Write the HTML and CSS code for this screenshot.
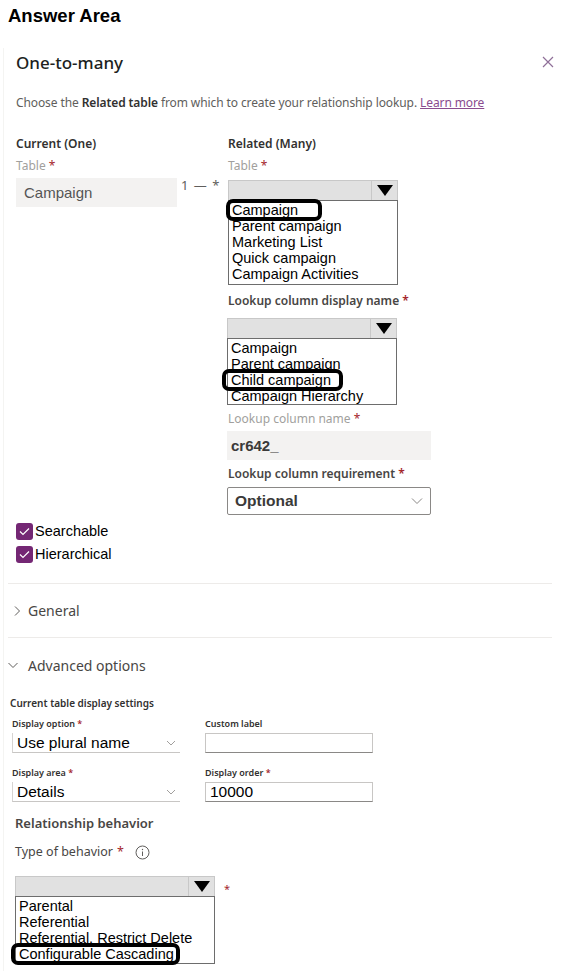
FILE: index.html
```html
<!DOCTYPE html>
<html lang="en">
<head>
    <meta charset="UTF-8">
    <meta name="viewport" content="width=device-width, initial-scale=1.0">
    <title>Answer Area - One-to-many</title>
    <link rel="stylesheet" href="styles.css">
</head>
<body>
    <h1 class="page-title">Answer Area</h1>

    <div class="panel">
        <div class="panel-head">
            <h2>One-to-many</h2>
            <svg class="close" width="12" height="12" viewBox="0 0 12 12">
                <path d="M1 1 L11 11 M11 1 L1 11" stroke="#8f6f98" stroke-width="1.2" fill="none"/>
            </svg>
        </div>

        <p class="intro">Choose the <b>Related table</b> from which to create your relationship lookup. <a href="#">Learn more</a></p>

        <div class="tables">
            <div class="col">
                <h3>Current (One)</h3>
                <div class="label muted">Table <span class="req">*</span></div>
                <div class="field readonly">Campaign</div>
            </div>

            <div class="link">1 — *</div>

            <div class="col">
                <h3>Related (Many)</h3>
                <div class="label muted">Table <span class="req">*</span></div>
                <div class="combo">
                    <div class="combo-head"><span class="combo-btn"><i class="tri"></i></span></div>
                    <ul class="combo-list list-table">
                        <li><span class="pick pick-long">Campaign</span></li>
                        <li>Parent campaign</li>
                        <li>Marketing List</li>
                        <li>Quick campaign</li>
                        <li>Campaign Activities</li>
                    </ul>
                </div>

                <div class="label dark gap-display">Lookup column display name <span class="req">*</span></div>
                <div class="combo combo-display">
                    <div class="combo-head"><span class="combo-btn"><i class="tri"></i></span></div>
                    <ul class="combo-list">
                        <li>Campaign</li>
                        <li>Parent campaign</li>
                        <li><span class="pick">Child campaign</span></li>
                        <li>Campaign Hierarchy</li>
                    </ul>
                </div>

                <div class="label muted gap-name">Lookup column name <span class="req">*</span></div>
                <div class="field readonly wide strong">cr642_</div>

                <div class="label dark gap-req">Lookup column requirement <span class="req">*</span></div>
                <div class="select wide">
                    <span>Optional</span>
                    <svg width="12" height="8" viewBox="0 0 12 8"><path d="M1 1.5 L6 6.5 L11 1.5" stroke="#8a8886" stroke-width="1" fill="none"/></svg>
                </div>
            </div>
        </div>

        <div class="checks">
            <label class="check">
                <span class="box"><svg width="11" height="9" viewBox="0 0 11 9"><path d="M1 4.5 L4 7.5 L10 1.5" stroke="#fff" stroke-width="1.2" fill="none"/></svg></span>
                Searchable
            </label>
            <label class="check">
                <span class="box"><svg width="11" height="9" viewBox="0 0 11 9"><path d="M1 4.5 L4 7.5 L10 1.5" stroke="#fff" stroke-width="1.2" fill="none"/></svg></span>
                Hierarchical
            </label>
        </div>

        <div class="divider"></div>
        <div class="toggle">
            <svg class="chev" width="10" height="12" viewBox="0 0 10 12"><path d="M3 1.5 L7.5 6 L3 10.5" stroke="#605e5c" stroke-width="1" fill="none"/></svg>
            General
        </div>
        <div class="divider"></div>
        <div class="toggle open">
            <svg class="chev" width="12" height="10" viewBox="0 0 12 10"><path d="M1.5 3 L6 7.5 L10.5 3" stroke="#605e5c" stroke-width="1" fill="none"/></svg>
            Advanced options
        </div>

        <div class="advanced">
            <div class="small-head">Current table display settings</div>
            <div class="settings">
                <div>
                    <div class="tiny-label">Display option <span class="req">*</span></div>
                    <div class="mini-select">
                        <span>Use plural name</span>
                        <svg width="10" height="6" viewBox="0 0 10 6"><path d="M1 1 L5 5 L9 1" stroke="#a19f9d" stroke-width="1" fill="none"/></svg>
                    </div>
                </div>
                <div>
                    <div class="tiny-label">Custom label</div>
                    <div class="mini-input"></div>
                </div>
                <div>
                    <div class="tiny-label">Display area <span class="req">*</span></div>
                    <div class="mini-select">
                        <span>Details</span>
                        <svg width="10" height="6" viewBox="0 0 10 6"><path d="M1 1 L5 5 L9 1" stroke="#a19f9d" stroke-width="1" fill="none"/></svg>
                    </div>
                </div>
                <div>
                    <div class="tiny-label">Display order <span class="req">*</span></div>
                    <div class="mini-input">10000</div>
                </div>
            </div>

            <div class="behavior">
                <h4>Relationship behavior</h4>
                <div class="type-label">
                    Type of behavior <span class="req">*</span>
                    <svg class="info" width="15" height="15" viewBox="0 0 15 15">
                        <circle cx="7.5" cy="7.5" r="6.5" stroke="#605e5c" stroke-width="1" fill="none"/>
                        <line x1="7.5" y1="6.5" x2="7.5" y2="11" stroke="#605e5c" stroke-width="1"/>
                        <circle cx="7.5" cy="4.5" r="0.7" fill="#605e5c"/>
                    </svg>
                </div>
                <div class="behavior-row">
                    <div class="combo combo-behavior">
                        <div class="combo-head"><span class="combo-btn"><i class="tri"></i></span></div>
                        <ul class="combo-list">
                            <li>Parental</li>
                            <li>Referential</li>
                            <li>Referential, Restrict Delete</li>
                            <li><span class="pick pick-tight">Configurable Cascading</span></li>
                        </ul>
                    </div>
                    <span class="req side">*</span>
                </div>
            </div>
        </div>
    </div>
</body>
</html>
```

FILE: styles.css
```css
* {
    box-sizing: border-box;
}

body {
    margin: 0;
    font-family: "Noto Sans", "Open Sans", sans-serif;
    color: #323130;
    background: #fff;
}

ul {
    list-style: none;
    margin: 0;
    padding: 0;
}

.page-title {
    margin: 0;
    padding: 5px 8px 0;
    font-family: "Liberation Sans", Arial, sans-serif;
    font-size: 18.5px;
    line-height: 22px;
    font-weight: bold;
    color: #000;
}

.panel {
    margin: 21px 0 0 3px;
    padding: 0 9px 8px 12px;
    border-left: 1px solid #f4f4f2;
}

.panel-head {
    display: flex;
    align-items: center;
    justify-content: space-between;
    height: 28px;
}

.panel-head h2 {
    margin: 0;
    font-size: 17px;
    font-weight: 500;
    color: #201f1e;
}

.close {
    margin-right: -2px;
}

.intro {
    margin: 18px 0 0;
    font-size: 12px;
    line-height: 18px;
    color: #605e5c;
    letter-spacing: -0.1px;
}

.intro b {
    color: #323130;
    font-weight: 600;
}

.intro a {
    color: #8a4b8f;
}

.req {
    color: #a4262c;
}

/* current / related columns */
.tables {
    display: grid;
    grid-template-columns: 161px 51px 204px;
    margin-top: 24px;
}

.tables h3 {
    margin: 0;
    font-size: 12px;
    line-height: 16px;
    font-weight: 600;
    color: #323130;
}

.label {
    font-size: 12px;
    line-height: 16px;
    margin-top: 6px;
}

.label.muted {
    color: #a19f9d;
}

.label.dark {
    color: #484644;
    font-weight: 600;
}

.gap-display {
    margin-top: 8px;
}

.gap-name {
    margin-top: 6px;
}

.gap-req {
    margin-top: 6px;
}

.field {
    margin-top: 4px;
    height: 29px;
    display: flex;
    align-items: center;
    padding-left: 8px;
    font-family: "Liberation Sans", Arial, sans-serif;
    font-size: 15px;
}

.field.readonly {
    background: #f3f2f1;
    color: #555;
}

.field.wide {
    width: 204px;
    margin-left: -1px;
    padding-left: 4px;
}

.field.strong {
    font-weight: bold;
    color: #3b3a39;
}

.link {
    padding: 40px 0 0 4px;
    font-size: 13px;
    color: #605e5c;
    white-space: nowrap;
    word-spacing: 2px;
}

/* old-style combo boxes */
.combo {
    width: 170px;
    margin-top: 6px;
    font-family: "Liberation Sans", Arial, sans-serif;
}

.combo-head {
    height: 20px;
    background: #e1e1e1;
    border: 1px solid #c8c8c8;
    border-bottom: none;
    display: flex;
    justify-content: flex-end;
}

.combo-btn {
    width: 26px;
    border-left: 1px solid #c8c8c8;
    display: flex;
    align-items: center;
    justify-content: center;
}

.tri {
    width: 0;
    height: 0;
    border-left: 8px solid transparent;
    border-right: 8px solid transparent;
    border-top: 11px solid #000;
}

.combo-list {
    border: 1px solid #6d6d6d;
    background: #fff;
    padding: 1px 0 1px 3px;
}

.combo-list li {
    font-size: 14.5px;
    line-height: 16px;
    color: #000;
    white-space: nowrap;
}

.list-table {
    height: 85px;
}

.combo-display {
    margin-top: 9px;
    margin-left: -1px;
}

.combo-display .combo-list {
    height: 67px;
}

/* hand-drawn ring round the chosen answer */
.pick {
    position: relative;
    display: inline-block;
    padding-right: 12px;
}

.pick::after {
    content: "";
    position: absolute;
    left: -9px;
    right: 0;
    top: -3px;
    bottom: -3px;
    border: 4px solid #000;
    border-radius: 7px;
}

.pick-long {
    padding-right: 24px;
}

.pick-long::after {
    left: -6px;
}

.pick-tight {
    padding-right: 6px;
}

.pick-tight::after {
    left: -8px;
}

.select {
    margin-top: 5px;
    height: 28px;
    border: 1px solid #8a8886;
    border-radius: 2px;
    display: flex;
    align-items: center;
    justify-content: space-between;
    padding: 0 7px 0 7px;
    font-family: "Liberation Sans", Arial, sans-serif;
    font-size: 15.5px;
    font-weight: bold;
    color: #3b3a39;
}

.select.wide {
    width: 204px;
    margin-left: -1px;
}

/* checkboxes */
.checks {
    margin-top: 7px;
    display: flex;
    flex-direction: column;
    gap: 5px;
}

.check {
    display: flex;
    align-items: center;
    gap: 2px;
    height: 18px;
    font-family: "Liberation Sans", Arial, sans-serif;
    font-size: 14.5px;
    color: #000;
}

.box {
    width: 17px;
    height: 17px;
    background: #742774;
    border-radius: 3px;
    display: flex;
    align-items: center;
    justify-content: center;
}

/* collapsible sections */
.divider {
    height: 1px;
    background: #edebe9;
    margin-left: -8px;
}

.checks + .divider {
    margin-top: 20px;
}

.toggle {
    height: 53px;
    display: flex;
    align-items: center;
    margin-left: -4px;
    font-size: 14px;
    color: #484644;
}

.toggle .chev {
    margin-right: 6px;
}

.toggle.open {
    height: 54px;
    margin-left: -9px;
}

.toggle.open .chev {
    margin-right: 9px;
}

/* advanced options */
.advanced {
    margin-left: -6px;
}

.small-head {
    margin-top: 4px;
    font-size: 10px;
    line-height: 14px;
    font-weight: 600;
    color: #323130;
}

.settings {
    display: grid;
    grid-template-columns: 168px 168px;
    column-gap: 25px;
    row-gap: 14px;
    margin: 8px 0 0 2px;
}

.tiny-label {
    font-size: 9px;
    line-height: 12px;
    font-weight: 600;
    color: #323130;
    margin-bottom: 3px;
}

.mini-select,
.mini-input {
    height: 20px;
    display: flex;
    align-items: center;
    font-family: "Liberation Sans", Arial, sans-serif;
    font-size: 15.5px;
    color: #000;
}

.mini-select {
    justify-content: space-between;
    padding: 0 4px 0 4px;
    border-left: 1px solid #d6d4d2;
    border-bottom: 1px solid #c8c6c4;
}

.mini-input {
    padding-left: 4px;
    border: 1px solid #c8c6c4;
    border-bottom-color: #8a8886;
}

.behavior {
    margin-left: 5px;
}

.behavior h4 {
    margin: 13px 0 0;
    font-size: 13px;
    line-height: 16px;
    font-weight: 600;
    color: #484644;
}

.type-label {
    margin-top: 13px;
    display: flex;
    align-items: center;
    font-size: 12.5px;
    line-height: 16px;
    color: #484644;
}

.type-label .req {
    margin-left: 4px;
}

.info {
    margin-left: 11px;
}

.behavior-row {
    display: flex;
    align-items: flex-start;
    margin-top: 16px;
}

.combo-behavior {
    width: 200px;
    margin-top: 0;
}

.combo-behavior .combo-list {
    height: 68px;
}

.side {
    margin: 5px 0 0 9px;
    font-size: 11px;
}
```
